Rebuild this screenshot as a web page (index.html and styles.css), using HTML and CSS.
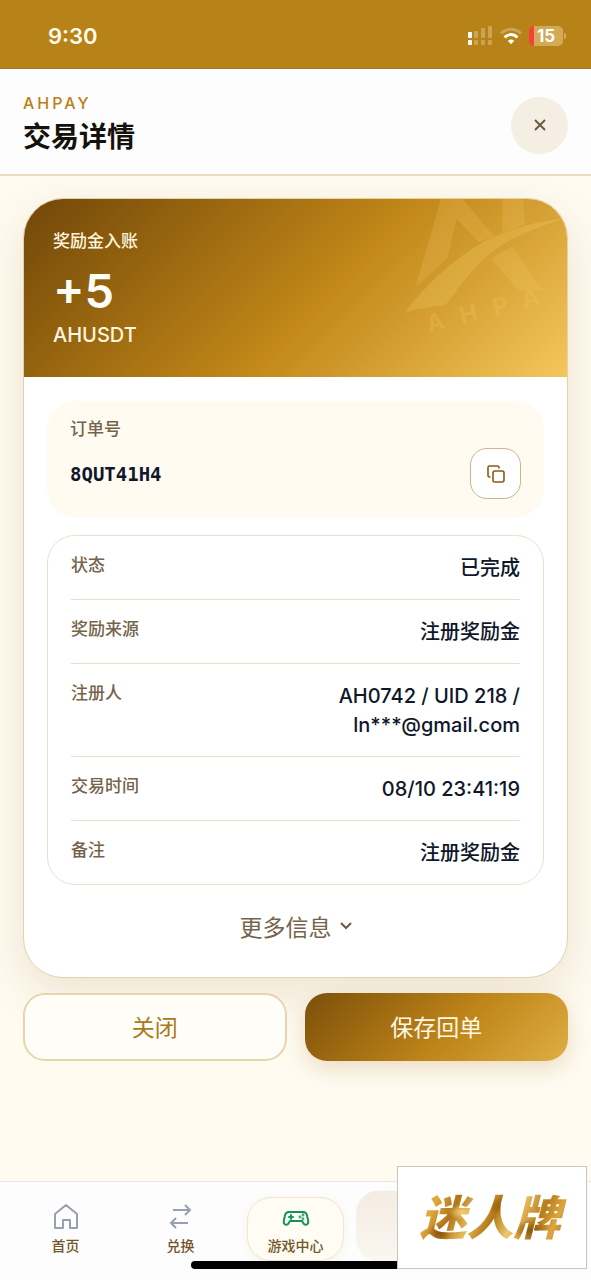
FILE: index.html
```html
<!DOCTYPE html>
<html lang="zh-CN">
<head>
    <meta charset="UTF-8">
    <meta name="viewport" content="width=device-width, initial-scale=1.0">
    <title>交易详情</title>
    <link rel="stylesheet" href="styles.css">
</head>
<body>
    <div class="status-bar">
        <span class="clock">9:30</span>
        <div class="status-icons">
            <svg width="26" height="20" viewBox="0 0 26 20" fill="#fff">
                <rect x="1" y="6" width="4" height="6" rx="1"/>
                <rect x="1" y="14" width="4" height="5" rx="1"/>
                <g opacity=".27">
                    <rect x="7" y="5" width="4" height="7" rx="1"/>
                    <rect x="7" y="14" width="4" height="5" rx="1"/>
                    <rect x="14" y="2" width="4" height="10" rx="1"/>
                    <rect x="14" y="14" width="4" height="5" rx="1"/>
                    <rect x="21" y="0" width="4" height="12" rx="1"/>
                    <rect x="21" y="14" width="4" height="5" rx="1"/>
                </g>
            </svg>
            <svg width="22" height="18" viewBox="0 0 22 18" fill="none" stroke="#fff" stroke-width="3">
                <path d="M1 6.5C7 .8 15 .8 21 6.5" opacity=".27"/>
                <path d="M4.5 10.3c4-3.6 9-3.6 13 0"/>
                <path d="M11 17.2l-3.2-3.4c2-1.7 4.400-1.700 6.400 0z" fill="#fff" stroke="none"/>
            </svg>
            <div class="battery">15</div>
        </div>
    </div>

    <header class="page-header">
        <div>
            <div class="brand">AHPAY</div>
            <h1>交易详情</h1>
        </div>
        <button class="close-btn" aria-label="关闭">
            <svg width="14" height="14" viewBox="0 0 14 14" fill="none" stroke="#695a43" stroke-width="2">
                <path d="M2 2l10 10M12 2L2 12"/>
            </svg>
        </button>
    </header>

    <main>
        <section class="card">
            <div class="hero">
                <svg class="hero-logo" viewBox="54 27 509 534" preserveAspectRatio="xMaxYMid meet" fill="#f5cf6c">
                    <path d="M185 27h65l95 112-45 18-67-70-28 118-95 87z" opacity=".2"/>
                    <path d="M370 27h62l6 75-68 26z" opacity=".2"/>
                    <path d="M335 205l65-35 92 130-75 0z" opacity=".2"/>
                    <path d="M80 365C150 270 245 190 335 145 410 110 480 95 555 85 470 115 390 145 340 185 280 232 235 300 200 345 160 350 120 357 80 365z" opacity=".26"/>
                    <text x="150" y="427" transform="rotate(-14 150 427)" opacity=".22">AHPA</text>
                </svg>
                <p class="hero-label">奖励金入账</p>
                <p class="amount">+5</p>
                <p class="currency">AHUSDT</p>
            </div>

            <div class="card-body">
                <div class="order">
                    <div class="order-label">订单号</div>
                    <div class="order-row">
                        <span class="order-code">8QUT41H4</span>
                        <button class="copy-btn" aria-label="复制">
                            <svg width="20" height="20" viewBox="0 0 20 20" fill="none" stroke="#8a5a14" stroke-width="1.6">
                                <rect x="7" y="7" width="11" height="11" rx="2"/>
                                <path d="M4.500 13H3.500a1.500 1.500 0 0 1-1.500-1.500v-8A1.500 1.500 0 0 1 3.500 2h8A1.500 1.500 0 0 1 13 3.500v1"/>
                            </svg>
                        </button>
                    </div>
                </div>

                <dl class="details">
                    <div class="row"><dt>状态</dt><dd>已完成</dd></div>
                    <div class="row"><dt>奖励来源</dt><dd>注册奖励金</dd></div>
                    <div class="row"><dt>注册人</dt><dd>AH0742 / UID 218 / ln***@gmail.com</dd></div>
                    <div class="row"><dt>交易时间</dt><dd>08/10 23:41:19</dd></div>
                    <div class="row"><dt>备注</dt><dd>注册奖励金</dd></div>
                </dl>

                <button class="more-btn">
                    更多信息
                    <svg width="12" height="8" viewBox="0 0 12 8" fill="none" stroke="#695a43" stroke-width="2">
                        <path d="M1 1l5 5 5-5"/>
                    </svg>
                </button>
            </div>
        </section>

        <div class="actions">
            <button class="btn btn-outline">关闭</button>
            <button class="btn btn-gold">保存回单</button>
        </div>
    </main>

    <nav class="tab-bar">
        <a class="tab" href="#">
            <svg width="28" height="28" viewBox="0 0 28 28" fill="none" stroke="#979fb3" stroke-width="2" stroke-linejoin="round">
                <path d="M3 10L14 1l11 9v14H18v-8h-7v8H3z"/>
            </svg>
            首页
        </a>
        <a class="tab" href="#">
            <svg width="28" height="28" viewBox="0 0 28 28" fill="none" stroke="#979fb3" stroke-width="2">
                <path d="M6 6h17M18 1l5 5-5 5M21 19H4M9 14l-5 5 5 5"/>
            </svg>
            兑换
        </a>
        <a class="tab tab-game" href="#">
            <svg width="28" height="28" viewBox="0 0 28 28" fill="none" stroke="#14915f" stroke-width="2" stroke-linecap="round" stroke-linejoin="round">
                <path d="M7 8h14c3 0 4 2 4.400 5l.8 4c.6 4-3.200 5-5 2l-1.200-2H8l-1.200 2c-1.800 3-5.600 2-5-2l.8-4C3 10 4 8 7 8z"/>
                <path d="M9 11v4M7 13h4"/>
                <circle cx="18" cy="13" r=".4"/>
                <circle cx="21" cy="11" r=".4"/>
                <circle cx="21" cy="15" r=".4"/>
            </svg>
            游戏中心
        </a>
        <span class="tab tab-raised"></span>
        <span class="tab"></span>
        <div class="home-indicator"></div>
        <div class="stamp"><span>迷人牌</span></div>
    </nav>
</body>
</html>
```

FILE: styles.css
```css
* {
    box-sizing: border-box;
}

body {
    margin: 0;
    min-height: 100vh;
    display: flex;
    flex-direction: column;
    background: #fffbf1;
    color: #0f172a;
    font-family: Inter, "Noto Sans CJK SC", sans-serif;
}

h1, p, dl, dd {
    margin: 0;
}

button {
    font-family: inherit;
    padding: 0;
    border: none;
    cursor: pointer;
}

svg {
    flex-shrink: 0;
}

/* status bar */
.status-bar {
    height: 69px;
    padding: 3px 28px 0 48px;
    display: flex;
    justify-content: space-between;
    align-items: center;
    background: #b78217;
    border-bottom: 1px solid #a47925;
    color: #fffbea;
}

.clock {
    font-size: 22px;
    font-weight: 600;
}

.status-icons {
    display: flex;
    align-items: center;
    gap: 7px;
}

.battery {
    position: relative;
    width: 34px;
    height: 20px;
    border-radius: 5px;
    background: linear-gradient(90deg, #f44336 5px, #d3aa58 5px);
    color: #fff;
    font-size: 17px;
    font-weight: 700;
    line-height: 20px;
    text-align: center;
}

.battery::after {
    content: "";
    position: absolute;
    right: -3px;
    top: 7px;
    width: 2px;
    height: 6px;
    border-radius: 0 2px 2px 0;
    background: #d3aa58;
}

/* header */
.page-header {
    padding: 24px 23px 17px;
    display: flex;
    justify-content: space-between;
    align-items: center;
    background: #fdfdfd;
    border-bottom: 2px solid #e9ddc3;
}

.brand {
    color: #b78217;
    font-size: 16px;
    font-weight: 500;
    letter-spacing: 3px;
    line-height: 20px;
}

h1 {
    margin-top: 4px;
    color: #15120c;
    font-size: 28px;
    font-weight: 700;
    line-height: 40px;
}

.close-btn {
    width: 57px;
    height: 57px;
    display: flex;
    justify-content: center;
    align-items: center;
    border-radius: 50%;
    background: #f5eee2;
}

/* transaction card */
main {
    flex: 1;
    padding: 22px 23px 40px;
}

.card {
    overflow: hidden;
    border: 1px solid #e3d3ab;
    border-radius: 40px;
    background: #fff;
    box-shadow: 0 16px 48px rgba(130, 85, 20, 0.14);
}

.hero {
    position: relative;
    padding: 30px 29px 28px;
    background: linear-gradient(135deg, #714709 0%, #c28718 55%, #f3c65c 100%);
    color: #fff6df;
}

.hero-logo {
    position: absolute;
    top: 0;
    right: 0;
    height: 100%;
}

.hero-logo text {
    font-family: Inter, sans-serif;
    font-size: 70px;
    font-weight: 700;
    letter-spacing: 50px;
}

.hero-label {
    font-size: 17px;
    font-weight: 500;
    line-height: 24px;
}

.amount {
    margin-top: 8px;
    color: #fffdf5;
    font-size: 47px;
    font-weight: 600;
    line-height: 60px;
}

.currency {
    font-size: 20px;
    font-weight: 500;
    line-height: 28px;
}

.card-body {
    padding: 24px 23px 18px;
}

.order {
    padding: 16px 23px 18px;
    border-radius: 28px;
    background: #fffbf1;
}

.order-label {
    color: #75634b;
    font-size: 17px;
    font-weight: 500;
    line-height: 24px;
}

.order-row {
    margin-top: 7px;
    display: flex;
    justify-content: space-between;
    align-items: center;
}

.order-code {
    font-family: "DejaVu Sans Mono", monospace;
    font-size: 19px;
    font-weight: 700;
}

.copy-btn {
    width: 51px;
    height: 51px;
    display: flex;
    justify-content: center;
    align-items: center;
    border: 1px solid #cdb78a;
    border-radius: 17px;
    background: #fff;
}

.details {
    margin-top: 18px;
    padding: 0 23px;
    border: 1px solid #e9e1cc;
    border-radius: 28px;
}

.row {
    padding: 18px 0 16px;
    display: flex;
    justify-content: space-between;
    border-bottom: 1px solid #e9dfc9;
}

.row:last-child {
    border-bottom: none;
}

dt {
    color: #75634b;
    font-size: 17px;
    font-weight: 500;
    line-height: 23px;
}

dd {
    max-width: 50%;
    font-size: 20px;
    font-weight: 500;
    line-height: 29px;
    text-align: right;
}

.more-btn {
    width: 100%;
    height: 60px;
    margin: 11px 0 3px;
    display: flex;
    justify-content: center;
    align-items: center;
    gap: 8px;
    background: none;
    color: #75634b;
    font-size: 23px;
    font-weight: 400;
}

.actions {
    margin-top: 15px;
    display: grid;
    grid-template-columns: 1fr 1fr;
    gap: 18px;
}

.btn {
    height: 68px;
    padding-bottom: 3px;
    border-radius: 22px;
    font-size: 23px;
    font-weight: 400;
}

.btn-outline {
    border: 2px solid #e7d5ac;
    background: #fffdf8;
    color: #a87a1a;
}

.btn-gold {
    background: linear-gradient(135deg, #7c4f0b 0%, #bd8418 55%, #dfae45 100%);
    box-shadow: 0 8px 22px rgba(150, 100, 20, 0.2);
    color: #fff8e6;
}

/* bottom tabs */
.tab-bar {
    position: relative;
    height: 99px;
    padding: 8px 8px 0;
    display: grid;
    grid-template-columns: repeat(5, 1fr);
    justify-items: center;
    align-items: start;
    border-top: 1px solid #e8e5e2;
    background: #fdfdfd;
}

.tab {
    width: 97px;
    height: 64px;
    margin-top: 7px;
    padding-top: 6px;
    display: flex;
    flex-direction: column;
    align-items: center;
    gap: 4px;
    border: 1px solid transparent;
    border-radius: 24px;
    color: #74552a;
    font-size: 14px;
    font-weight: 500;
    line-height: 20px;
    text-decoration: none;
}

.tab-game {
    border-color: #f2e6cb;
    background: #fffcf3;
    box-shadow: 0 2px 8px rgba(183, 130, 23, 0.08);
}

.tab-raised {
    width: 110px;
    height: 72px;
    margin-top: 0;
    background: linear-gradient(180deg, #f4ece1, #faf6f1);
}

.home-indicator {
    position: absolute;
    left: 50%;
    bottom: 11px;
    width: 211px;
    height: 8px;
    margin-left: -105px;
    border-radius: 4px;
    background: #000;
}

.stamp {
    position: absolute;
    right: 4px;
    bottom: 11px;
    width: 190px;
    height: 103px;
    display: flex;
    justify-content: center;
    align-items: center;
    border: 1px solid #c5c6be;
    background: #fff;
}

.stamp span {
    padding: 0 8px 0 4px;
    font-size: 47px;
    font-weight: 900;
    font-style: italic;
    line-height: 60px;
    background:
        radial-gradient(ellipse 14px 8px at 30% 40%, #f4cf74, transparent),
        radial-gradient(ellipse 18px 10px at 75% 70%, #8a560c, transparent),
        radial-gradient(ellipse 16px 9px at 55% 30%, #9a6210, transparent),
        radial-gradient(ellipse 12px 10px at 15% 75%, #8a560c, transparent),
        linear-gradient(115deg, #b27616 0%, #e2aa3c 14%, #b0741a 26%, #e8bb58 38%, #b27616 50%, #efc768 62%, #b87c1c 76%, #dca640 86%, #8e5c10 100%);
    -webkit-background-clip: text;
    background-clip: text;
    color: transparent;
}
```
